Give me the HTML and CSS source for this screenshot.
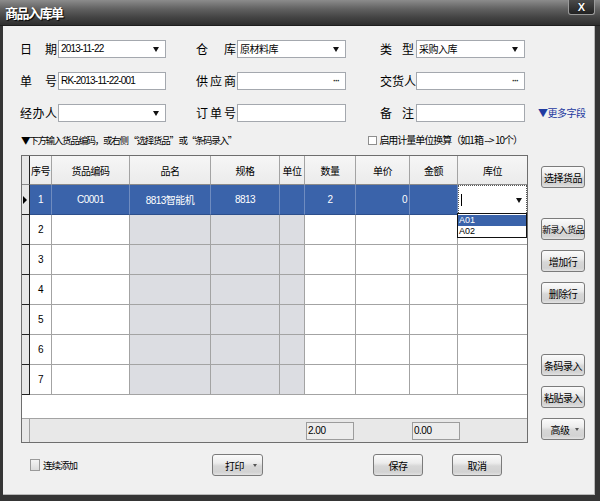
FILE: index.html
```html
<!DOCTYPE html>
<html lang="zh-CN">
<head>
<meta charset="utf-8">
<title>商品入库单</title>
<link rel="stylesheet" href="styles.css">
</head>
<body>
<div class="window">
  <div class="titlebar">
    <span class="title">商品入库单</span>
    <span class="close">X</span>
  </div>
  <div class="frame">
    <div class="form">
      <div class="form-row">
        <div class="field f1"><span class="lbl">日期</span><div class="inp"><span class="val">2013-11-22</span><span class="tri"></span></div></div>
        <div class="field f2"><span class="lbl">仓库</span><div class="inp"><span class="val cjk">原材料库</span><span class="tri"></span></div></div>
        <div class="field f3"><span class="lbl">类型</span><div class="inp"><span class="val cjk">采购入库</span><span class="tri"></span></div></div>
      </div>
      <div class="form-row">
        <div class="field f1"><span class="lbl">单号</span><div class="inp"><span class="val">RK-2013-11-22-001</span></div></div>
        <div class="field f2"><span class="lbl">供应商</span><div class="inp"><span class="val"></span><span class="dots">···</span></div></div>
        <div class="field f3"><span class="lbl">交货人</span><div class="inp"><span class="val"></span><span class="dots">···</span></div></div>
      </div>
      <div class="form-row">
        <div class="field f1"><span class="lbl">经办人</span><div class="inp"><span class="val"></span><span class="tri"></span></div></div>
        <div class="field f2"><span class="lbl">订单号</span><div class="inp"><span class="val"></span></div></div>
        <div class="field f3"><span class="lbl">备注</span><div class="inp"><span class="val"></span></div></div>
        <span class="more">▼更多字段</span>
      </div>
    </div>

    <div class="hint-row">
      <span class="hint">▼下方输入货品编码，或右侧 “选择货品” 或“条码录入”</span>
      <span class="unit-opt"><span class="chk"></span>启用计量单位换算（如1箱 --&gt; 10个）</span>
    </div>

    <div class="main">
      <div class="grid">
        <div class="g-row g-head">
          <div class="c ind"></div><div class="c">序号</div><div class="c">货品编码</div><div class="c">品名</div><div class="c">规格</div><div class="c">单位</div><div class="c">数量</div><div class="c">单价</div><div class="c">金额</div><div class="c last">库位</div>
        </div>
        <div class="g-row g-sel">
          <div class="c ind"><span class="cur"></span></div><div class="c">1</div><div class="c">C0001</div><div class="c">8813智能机</div><div class="c">8813</div><div class="c"></div><div class="c">2</div><div class="c num">0</div><div class="c"></div><div class="c last edit"><span class="caret"></span><span class="tri"></span></div>
        </div>
        <div class="g-row g-body">
          <div class="c ind"></div><div class="c">2</div><div class="c"></div><div class="c ro"></div><div class="c ro"></div><div class="c ro"></div><div class="c"></div><div class="c"></div><div class="c"></div><div class="c last"></div>
        </div>
        <div class="g-row g-body">
          <div class="c ind"></div><div class="c">3</div><div class="c"></div><div class="c ro"></div><div class="c ro"></div><div class="c ro"></div><div class="c"></div><div class="c"></div><div class="c"></div><div class="c last"></div>
        </div>
        <div class="g-row g-body">
          <div class="c ind"></div><div class="c">4</div><div class="c"></div><div class="c ro"></div><div class="c ro"></div><div class="c ro"></div><div class="c"></div><div class="c"></div><div class="c"></div><div class="c last"></div>
        </div>
        <div class="g-row g-body">
          <div class="c ind"></div><div class="c">5</div><div class="c"></div><div class="c ro"></div><div class="c ro"></div><div class="c ro"></div><div class="c"></div><div class="c"></div><div class="c"></div><div class="c last"></div>
        </div>
        <div class="g-row g-body">
          <div class="c ind"></div><div class="c">6</div><div class="c"></div><div class="c ro"></div><div class="c ro"></div><div class="c ro"></div><div class="c"></div><div class="c"></div><div class="c"></div><div class="c last"></div>
        </div>
        <div class="g-row g-body">
          <div class="c ind"></div><div class="c">7</div><div class="c"></div><div class="c ro"></div><div class="c ro"></div><div class="c ro"></div><div class="c"></div><div class="c"></div><div class="c"></div><div class="c last"></div>
        </div>
        <div class="g-fill"></div>
        <div class="g-foot">
          <div class="f ind"></div><div class="f sp1"></div><div class="f tot">2.00</div><div class="f sp2"></div><div class="f tot">0.00</div>
        </div>
        <div class="dropdown">
          <div class="opt on">A01</div>
          <div class="opt">A02</div>
        </div>
      </div>

      <div class="side">
        <button class="btn sbtn b-sel">选择货品</button>
        <button class="btn sbtn b-new">新录入货品</button>
        <button class="btn sbtn b-gap">增加行</button>
        <button class="btn sbtn b-gap">删除行</button>
        <button class="btn sbtn b-bar">条码录入</button>
        <button class="btn sbtn b-gap">粘贴录入</button>
        <button class="btn sbtn b-gap menu">高级<span class="mtri"></span></button>
      </div>
    </div>

    <div class="bottom">
      <span class="cont"><span class="chk big"></span>连续添加</span>
      <button class="btn bbtn b-print menu">打印<span class="mtri"></span></button>
      <button class="btn bbtn b-save">保存</button>
      <button class="btn bbtn b-cancel">取消</button>
    </div>
  </div>
</div>
</body>
</html>
```

FILE: styles.css
```css
* { box-sizing: border-box; }

html, body {
  margin: 0;
  padding: 0;
  background: #3a3a3a;
}

body {
  font-family: "Liberation Sans", "Noto Sans CJK SC", sans-serif;
  font-size: 12px;
  color: #000;
}

.window {
  width: 600px;
  height: 501px;
  display: flex;
  flex-direction: column;
  background: #333;
}

/* ---------- title bar ---------- */
.titlebar {
  height: 26px;
  flex: 0 0 26px;
  display: flex;
  justify-content: space-between;
  align-items: flex-start;
  padding: 0 5px 0 5px;
  background: linear-gradient(#8c8c8c 0%, #626262 35%, #474747 65%, #2e2e2e 100%);
  border-bottom: 1px solid #1e1e1e;
}

.title {
  margin-top: 5px;
  font-family: "Noto Sans CJK SC", sans-serif;
  font-size: 13px;
  font-weight: bold;
  line-height: 16px;
  letter-spacing: -1.5px;
  color: #fff;
  text-shadow: 1px 1px 1px #000;
}

.close {
  width: 27px;
  height: 15px;
  display: flex;
  align-items: center;
  justify-content: center;
  font-family: "Liberation Sans", sans-serif;
  font-size: 11px;
  font-weight: bold;
  color: #fff;
  background: linear-gradient(#4a4a4a, #222);
  border: 1px solid #9a9a9a;
  border-top: none;
  border-radius: 0 0 3px 3px;
  text-shadow: 0 0 1px #000;
}

/* ---------- frame ---------- */
.frame {
  flex: 1;
  background: #f0f0f0;
  border-left: 3px solid #353535;
  border-right: 5px solid #353535;
  border-bottom: 6px solid #353535;
  box-shadow: inset -1px -1px 0 #b8b8b8;
  display: flex;
  flex-direction: column;
}

/* ---------- form ---------- */
.form {
  padding: 14px 0 0 17px;
  display: flex;
  flex-direction: column;
  gap: 14px;
}

.form-row {
  display: flex;
  align-items: center;
  height: 18px;
}

.field {
  display: flex;
  align-items: center;
  height: 18px;
}

.lbl {
  display: inline-block;
  font-family: "Noto Sans CJK SC", sans-serif;
  font-size: 12px;
  line-height: 18px;
  text-align: justify;
  text-align-last: justify;
  white-space: nowrap;
}

.f1 { margin-right: 30px; }
.f1 .lbl { width: 37px; margin-right: 1px; }
.f1 .inp { width: 108px; }

.f2 { margin-right: 34px; }
.f2 .lbl { width: 40px; margin-right: 1px; }
.f2 .inp { width: 109px; }

.f3 { margin-right: 13px; }
.f3 .lbl { width: 34px; margin-right: 2px; }
.f3 .inp { width: 109px; }

.inp {
  height: 18px;
  background: #fff;
  border: 1px solid #a4a8ae;
  display: flex;
  align-items: center;
  padding: 0 6px 0 2px;
}

.val {
  flex: 1;
  font-size: 10px;
  letter-spacing: -0.8px;
  line-height: 16px;
  white-space: nowrap;
  overflow: hidden;
}

.val.cjk {
  font-family: "Noto Sans CJK SC", sans-serif;
  font-size: 10px;
  letter-spacing: -0.5px;
}

.tri {
  width: 0;
  height: 0;
  border-left: 3px solid transparent;
  border-right: 3px solid transparent;
  border-top: 5px solid #111;
}

.dots {
  font-size: 9px;
  font-weight: bold;
  line-height: 16px;
  letter-spacing: -1px;
  color: #222;
}

.more {
  font-family: "Noto Sans CJK SC", sans-serif;
  font-size: 10px;
  line-height: 18px;
  color: #1f3aa0;
  letter-spacing: -0.5px;
}

/* ---------- hint row ---------- */
.hint-row {
  margin: 9px 0 0 18px;
  width: 507px;
  height: 18px;
  display: flex;
  justify-content: space-between;
  align-items: center;
  padding-right: 6px;
}

.hint, .unit-opt {
  font-family: "Noto Sans CJK SC", sans-serif;
  font-size: 10px;
  letter-spacing: -1px;
  line-height: 18px;
  white-space: nowrap;
}

.hint {
  font-size: 9.5px;
  letter-spacing: -1.3px;
}

.unit-opt {
  display: flex;
  align-items: center;
}

.chk {
  display: inline-block;
  width: 9px;
  height: 9px;
  background: #fff;
  border: 1px solid #8e8e8e;
  margin-right: 2px;
}

.chk.big {
  flex: 0 0 10px;
  width: 10px;
  height: 12px;
  background: linear-gradient(#f4f4f4, #dcdcdc);
  border-color: #9a9a9a;
  margin-right: 3px;
}

/* ---------- main ---------- */
.main {
  display: flex;
  margin: 6px 0 0 18px;
}

.grid {
  position: relative;
  width: 507px;
  height: 288px;
  border: 1px solid #6e6e6e;
  background: #fff;
  display: flex;
  flex-direction: column;
}

.g-row {
  display: grid;
  grid-template-columns: 8px 22px 78px 81px 69px 25px 51px 54px 48px 69px;
  flex: 0 0 auto;
}

.c {
  border-right: 1px solid #a3a3a3;
  border-bottom: 1px solid #a3a3a3;
  display: flex;
  align-items: center;
  justify-content: center;
  font-size: 10px;
  letter-spacing: -0.5px;
  white-space: nowrap;
  overflow: hidden;
}

.c.last { border-right: none; }

.g-head .c {
  height: 29px;
  background: linear-gradient(#f6f6f6, #ebebeb);
  font-family: "Noto Sans CJK SC", sans-serif;
  font-size: 10px;
  letter-spacing: -0.5px;
  border-bottom-color: #8a8a8a;
}

.c.ind {
  background: #e6e6e6;
  border-right: 1px solid #222;
  border-bottom: 1px solid #222;
}

.g-head .c.ind {
  background: #e6e6e6;
  border-bottom-color: #8a8a8a;
}

.g-sel .c, .g-body .c { height: 30px; }

.g-sel .c {
  background: #3a63aa;
  color: #fff;
  border-right-color: #6f8cc0;
  border-bottom-color: #2d4f8c;
}

.g-sel .c.ind {
  background: #e6e6e6;
  border-right-color: #222;
  border-bottom-color: #222;
  justify-content: flex-start;
  padding-left: 1px;
}

.cur {
  width: 0;
  height: 0;
  border-top: 4px solid transparent;
  border-bottom: 4px solid transparent;
  border-left: 4px solid #000;
}

.g-sel .c.num {
  justify-content: flex-end;
  padding-right: 2px;
}

.g-sel .c.edit {
  background: #fff;
  border: 1px dotted #555;
  justify-content: space-between;
  padding: 0 4px 0 2px;
}

.caret {
  width: 1px;
  height: 12px;
  background: #000;
}

.g-body .c.ro { background: #dcdde2; }

.g-fill {
  flex: 1;
  background: #fff;
}

.g-foot {
  flex: 0 0 24px;
  display: flex;
  align-items: center;
  background: #e8e8e8;
  border-top: 1px solid #a3a3a3;
}

.f.ind {
  width: 8px;
  height: 100%;
  border-right: 1px solid #a0a0a0;
}

.f.sp1 { width: 275px; }
.f.sp2 { width: 57px; }

.f.tot {
  width: 48px;
  height: 18px;
  margin-left: 1px;
  background: #ececec;
  border: 1px solid #9c9c9c;
  font-size: 10px;
  letter-spacing: -0.5px;
  line-height: 16px;
  padding-left: 1px;
}

.dropdown {
  position: absolute;
  left: 435px;
  top: 57px;
  width: 70px;
  height: 25px;
  background: #fff;
  border: 1px solid #111;
  padding-top: 1px;
}

.opt {
  height: 11px;
  font-size: 9px;
  line-height: 11px;
  padding-left: 1px;
  color: #000;
}

.opt.on {
  background: #3a63aa;
  color: #fff;
}

/* ---------- buttons ---------- */
.btn {
  font-family: "Noto Sans CJK SC", sans-serif;
  font-size: 10px;
  letter-spacing: -0.5px;
  color: #000;
  height: 22px;
  padding: 0;
  border: 1px solid #7b7b7b;
  border-radius: 3px;
  background: linear-gradient(#fbfbfb 0%, #ececec 40%, #d7d7d7 55%, #d2d2d2 85%, #e2e2e2 100%);
  display: flex;
  align-items: center;
  justify-content: center;
  white-space: nowrap;
}

.side {
  display: flex;
  flex-direction: column;
  margin-left: 13px;
}

.sbtn { width: 44px; }
.b-sel { margin-top: 11px; }
.b-new { margin-top: 30px; font-size: 9px; letter-spacing: -0.7px; }
.b-gap { margin-top: 10px; }
.b-bar { margin-top: 50px; }

.menu { position: relative; padding-right: 6px; }

.mtri {
  position: absolute;
  right: 5px;
  top: 9px;
  width: 0;
  height: 0;
  border-left: 2px solid transparent;
  border-right: 2px solid transparent;
  border-top: 3px solid #555;
}

.bottom {
  display: flex;
  align-items: center;
  margin: 11px 0 0 27px;
  height: 22px;
}

.cont {
  flex: 0 0 45px;
  width: 45px;
  display: flex;
  align-items: center;
  font-family: "Noto Sans CJK SC", sans-serif;
  font-size: 9.5px;
  letter-spacing: -1px;
  white-space: nowrap;
}

.bbtn { width: 50px; }
.b-print { width: 51px; margin-left: 137px; }
.b-save { margin-left: 110px; }
.b-cancel { margin-left: 29px; }
```
